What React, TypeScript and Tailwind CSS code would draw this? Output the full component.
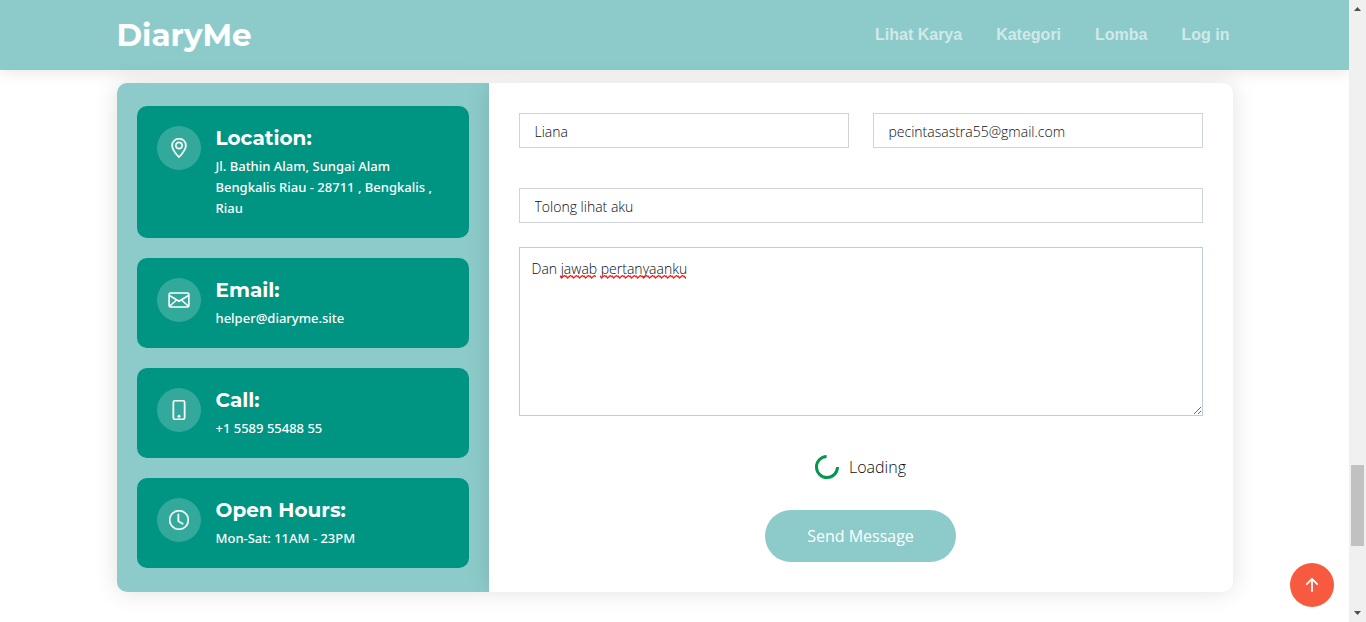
import type { ReactNode } from "react";
import { BsArrowUpShort, BsClock, BsGeoAlt, BsPhone } from "react-icons/bs";

const navItems = ["Lihat Karya", "Kategori", "Lomba", "Log in"];

const fieldClass =
  "block w-full min-w-0 border border-[#ced4da] bg-white px-[15px] pt-0.5 h-[35px] text-[14px] font-light text-[#0b0d10] outline-none";

const cardIconClass = "size-5 stroke-current [stroke-width:0.4]";

function EnvelopeIcon() {
  return (
    <svg viewBox="0 0 20 16" className="h-4 w-[22px]" fill="none" stroke="currentColor" strokeWidth="1.6" aria-hidden="true">
      <rect x="0.1" y="1" width="19.8" height="14" rx="1.5" />
      <path d="M0.5 3.5 L10 9.2 L19.5 3.5 M0.8 14 L7.5 8 M19.2 14 L12.5 8" />
    </svg>
  );
}

function InfoCard({ icon, title, children }: { icon: ReactNode; title: string; children: ReactNode }) {
  return (
    <section className="flex items-start gap-[15px] rounded-[10px] bg-[#009483] px-5 pt-5 pb-[19px] text-white">
      <span className="flex size-11 shrink-0 items-center justify-center rounded-full bg-white/20">{icon}</span>
      <div className="min-w-0">
        <h4 className="font-['Montserrat','Inter',sans-serif] text-[20px] leading-6 font-bold">{title}</h4>
        <p className="mt-1.5 font-['Segoe_UI','Noto_Sans',sans-serif] text-[13px] leading-[21px] font-medium">{children}</p>
      </div>
    </section>
  );
}

function Squiggle({ className, id }: { className: string; id: string }) {
  return (
    <svg className={className} height="4" aria-hidden="true">
      <defs>
        <pattern id={id} width="6" height="4" patternUnits="userSpaceOnUse">
          <path d="M-1.5 -1 L1.5 3 L4.5 0.5 L7.5 3" fill="none" stroke="#ff1a1a" strokeWidth="1.3" />
        </pattern>
      </defs>
      <rect width="100%" height="4" fill={`url(#${id})`} />
    </svg>
  );
}

function Scrollbar() {
  return (
    <div className="sticky top-0 flex h-screen w-[17px] shrink-0 flex-col items-center justify-between bg-[#f0f0f0] py-[7px]" aria-hidden="true">
      <svg width="7" height="4" className="shrink-0 fill-[#505050]"><path d="M0 4 L3.5 0 L7 4Z" /></svg>
      <div className="flex w-[13px] grow flex-col">
        <div className="grow-[454]" />
        <div className="grow-[81] bg-[#c1c1c1]" />
        <div className="grow-[65]" />
      </div>
      <svg width="7" height="4" className="shrink-0 fill-[#505050]"><path d="M0 0 L3.5 4 L7 0Z" /></svg>
    </div>
  );
}

export default function App() {
  return (
    <div className="flex min-h-screen bg-white font-['Segoe_UI','Open_Sans',sans-serif] text-[#212529]">
      <div className="min-w-0 grow">
        <header className="bg-[#8dcbcb] shadow-[0_2px_15px_rgba(0,0,0,0.1)]">
          <div className="mx-auto flex h-[70px] max-w-[1140px] items-center justify-between px-3">
            <a href="#" className="font-['Montserrat','Inter',sans-serif] text-[31px] leading-9 font-bold text-white">
              DiaryMe
            </a>
            <nav className="flex gap-[34px] pr-[3px] font-['Liberation_Sans',sans-serif] text-[16px] font-bold text-white/60">
              {navItems.map((item) => (
                <a key={item} href="#">{item}</a>
              ))}
            </nav>
          </div>
        </header>

        <main className="mx-auto max-w-[1140px] px-3 pt-[13px] pb-[30px]">
          <div className="flex">
            <aside className="flex w-1/3 shrink-0 flex-col gap-5 rounded-l-[10px] bg-[#8dcbcb] px-5 pt-[23px] pb-6 shadow-[0_0_24px_rgba(0,0,0,0.12)]">
              <InfoCard icon={<BsGeoAlt className={cardIconClass} />} title="Location:">
                Jl. Bathin Alam, Sungai Alam<br />Bengkalis Riau - 28711 , Bengkalis ,<br />Riau
              </InfoCard>
              <InfoCard icon={<EnvelopeIcon />} title="Email:">helper@diaryme.site</InfoCard>
              <InfoCard icon={<BsPhone className={cardIconClass} />} title="Call:">+1 5589 55488 55</InfoCard>
              <InfoCard icon={<BsClock className={cardIconClass} />} title="Open Hours:">Mon-Sat: 11AM - 23PM</InfoCard>
            </aside>

            <form
              className="flex min-w-0 grow flex-col rounded-r-[10px] bg-white p-[30px] shadow-[0_0_24px_rgba(0,0,0,0.12)]"
              onSubmit={(e) => e.preventDefault()}
            >
              <div className="grid grid-cols-2 gap-6">
                <input aria-label="Nama" type="text" defaultValue="Liana" className={fieldClass} />
                <input aria-label="Email" type="email" defaultValue="pecintasastra55@gmail.com" className={fieldClass} />
              </div>
              <input aria-label="Subjek" type="text" defaultValue="Tolong lihat aku" className={`${fieldClass} mt-10`} />
              <div className="relative mt-6">
                <textarea
                  aria-label="Pesan"
                  spellCheck={false}
                  defaultValue="Dan jawab pertanyaanku"
                  className="block h-[169px] w-full border border-[#bdd0d6] px-3 py-2.5 text-[14px] leading-[21px] font-light text-[#0b0d10] outline-none"
                />
                <Squiggle id="wave-jawab" className="pointer-events-none absolute top-7 left-[41px] w-9" />
                <Squiggle id="wave-pertanyaanku" className="pointer-events-none absolute top-7 left-[81px] w-[86px]" />
              </div>
              <div role="status" className="mt-[39px] flex h-6 items-center justify-center gap-2.5 text-[16px] font-light text-[#0b0d10]">
                <svg viewBox="0 0 24 24" className="size-6" fill="none" stroke="#059652" strokeWidth="3" aria-hidden="true">
                  <path d="M11.6 1.5 A10.5 10.5 0 1 0 22.5 12" />
                </svg>
                Loading
              </div>
              <button type="submit" className="mt-[31px] h-[52px] w-[191px] self-center rounded-full bg-[#8dcbcb] text-[16px] text-white">
                Send Message
              </button>
            </form>
          </div>
        </main>
      </div>

      <a
        href="#"
        aria-label="Kembali ke atas"
        className="fixed right-8 bottom-[15px] flex size-11 items-center justify-center rounded-full bg-[#f85a40] text-white"
      >
        <BsArrowUpShort className="size-7" />
      </a>
      <Scrollbar />
    </div>
  );
}
